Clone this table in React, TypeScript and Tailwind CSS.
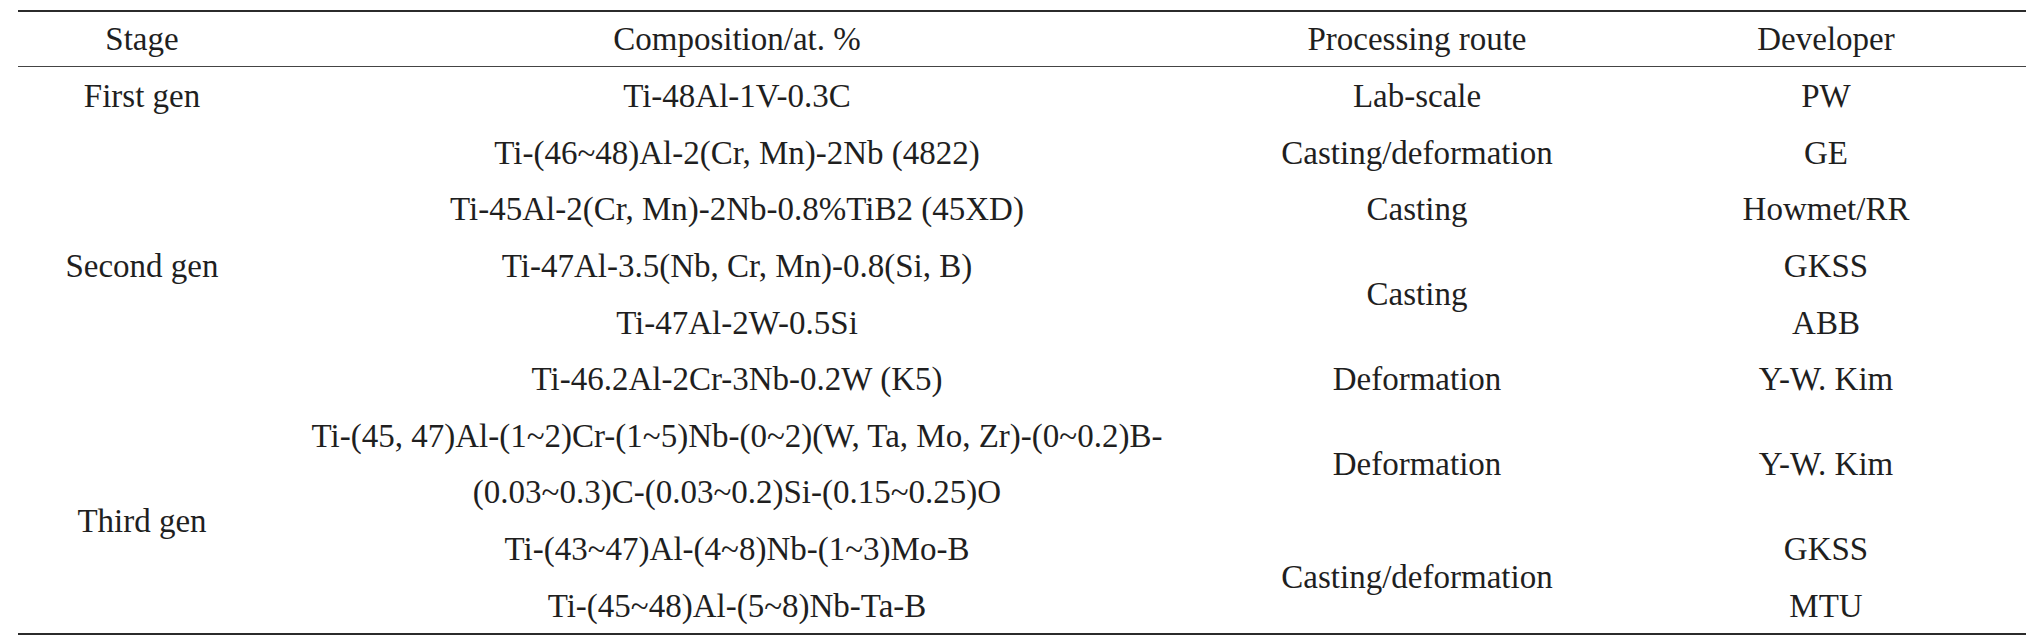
import React from "react";

const cell = "flex items-center justify-center whitespace-nowrap pt-[3px]";
const head = "flex items-center justify-center whitespace-nowrap border-b border-[#444]";

export default function App() {
  return (
    <div className="w-[2042px] h-[644px] bg-white pt-[10px] pl-[18px] font-['Liberation_Serif','Times_New_Roman',serif]">
      <div className="w-[2008px] grid grid-cols-[248px_942px_418px_400px] grid-rows-[55px_repeat(10,56.6px)] border-t-2 border-b-2 border-[#2b2b2b] text-[#1f1f1f] text-[33px] leading-none">
        <div className={head}>Stage</div>
        <div className={head}>Composition/at. %</div>
        <div className={head}>Processing route</div>
        <div className={head}>Developer</div>

        <div className={`${cell} col-start-1 row-start-2`}>First gen</div>
        <div className={`${cell} col-start-1 row-start-3 row-span-5`}>Second gen</div>
        <div className={`${cell} col-start-1 row-start-8 row-span-4`}>Third gen</div>

        <div className={`${cell} col-start-2 row-start-2`}>Ti-48Al-1V-0.3C</div>
        <div className={`${cell} col-start-2 row-start-3`}>Ti-(46~48)Al-2(Cr, Mn)-2Nb (4822)</div>
        <div className={`${cell} col-start-2 row-start-4`}>Ti-45Al-2(Cr, Mn)-2Nb-0.8%TiB2 (45XD)</div>
        <div className={`${cell} col-start-2 row-start-5`}>Ti-47Al-3.5(Nb, Cr, Mn)-0.8(Si, B)</div>
        <div className={`${cell} col-start-2 row-start-6`}>Ti-47Al-2W-0.5Si</div>
        <div className={`${cell} col-start-2 row-start-7`}>Ti-46.2Al-2Cr-3Nb-0.2W (K5)</div>
        <div className={`${cell} col-start-2 row-start-8`}>Ti-(45, 47)Al-(1~2)Cr-(1~5)Nb-(0~2)(W, Ta, Mo, Zr)-(0~0.2)B-</div>
        <div className={`${cell} col-start-2 row-start-9`}>(0.03~0.3)C-(0.03~0.2)Si-(0.15~0.25)O</div>
        <div className={`${cell} col-start-2 row-start-10`}>Ti-(43~47)Al-(4~8)Nb-(1~3)Mo-B</div>
        <div className={`${cell} col-start-2 row-start-11`}>Ti-(45~48)Al-(5~8)Nb-Ta-B</div>

        <div className={`${cell} col-start-3 row-start-2`}>Lab-scale</div>
        <div className={`${cell} col-start-3 row-start-3`}>Casting/deformation</div>
        <div className={`${cell} col-start-3 row-start-4`}>Casting</div>
        <div className={`${cell} col-start-3 row-start-5 row-span-2`}>Casting</div>
        <div className={`${cell} col-start-3 row-start-7`}>Deformation</div>
        <div className={`${cell} col-start-3 row-start-8 row-span-2`}>Deformation</div>
        <div className={`${cell} col-start-3 row-start-10 row-span-2`}>Casting/deformation</div>

        <div className={`${cell} col-start-4 row-start-2`}>PW</div>
        <div className={`${cell} col-start-4 row-start-3`}>GE</div>
        <div className={`${cell} col-start-4 row-start-4`}>Howmet/RR</div>
        <div className={`${cell} col-start-4 row-start-5`}>GKSS</div>
        <div className={`${cell} col-start-4 row-start-6`}>ABB</div>
        <div className={`${cell} col-start-4 row-start-7`}>Y-W. Kim</div>
        <div className={`${cell} col-start-4 row-start-8 row-span-2`}>Y-W. Kim</div>
        <div className={`${cell} col-start-4 row-start-10`}>GKSS</div>
        <div className={`${cell} col-start-4 row-start-11`}>MTU</div>
      </div>
    </div>
  );
}
